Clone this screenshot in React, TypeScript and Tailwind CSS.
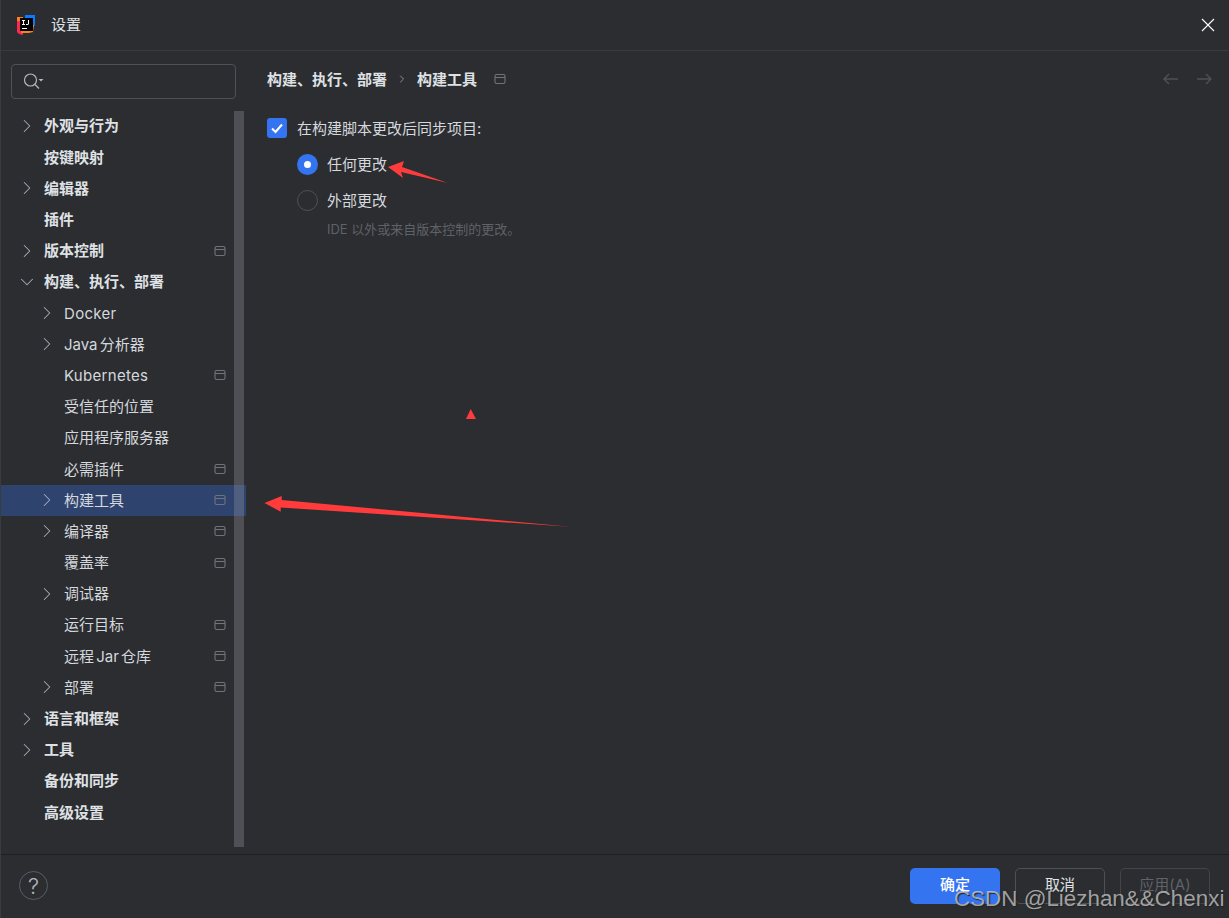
import { ChevronRight, ChevronDown } from 'lucide-react';

const FONT = "font-['Inter','Noto_Sans_CJK_SC',sans-serif]";

type Row = { label: string; level: 0 | 1; arrow?: 'right' | 'down'; pin?: boolean; selected?: boolean; wide?: boolean };

const rows: Row[] = [
  { label: '外观与行为', level: 0, arrow: 'right' },
  { label: '按键映射', level: 0 },
  { label: '编辑器', level: 0, arrow: 'right' },
  { label: '插件', level: 0 },
  { label: '版本控制', level: 0, arrow: 'right', pin: true },
  { label: '构建、执行、部署', level: 0, arrow: 'down' },
  { label: 'Docker', level: 1, arrow: 'right', wide: true },
  { label: 'Java 分析器', level: 1, arrow: 'right' },
  { label: 'Kubernetes', level: 1, pin: true, wide: true },
  { label: '受信任的位置', level: 1 },
  { label: '应用程序服务器', level: 1 },
  { label: '必需插件', level: 1, pin: true },
  { label: '构建工具', level: 1, arrow: 'right', pin: true, selected: true },
  { label: '编译器', level: 1, arrow: 'right', pin: true },
  { label: '覆盖率', level: 1, pin: true },
  { label: '调试器', level: 1, arrow: 'right' },
  { label: '运行目标', level: 1, pin: true },
  { label: '远程 Jar 仓库', level: 1, pin: true },
  { label: '部署', level: 1, arrow: 'right', pin: true },
  { label: '语言和框架', level: 0, arrow: 'right' },
  { label: '工具', level: 0, arrow: 'right' },
  { label: '备份和同步', level: 0 },
  { label: '高级设置', level: 0 },
];

function PinIcon() {
  return (
    <svg width="12" height="12" viewBox="0 0 12 12" fill="none" stroke="#6f737a" strokeWidth="1.1">
      <rect x="1" y="1.5" width="10" height="9" rx="1.5" />
      <path d="M1 4.5h10" />
    </svg>
  );
}

function Logo() {
  return (
    <svg width="20" height="20" viewBox="0 0 20 20">
      <path d="M1 2h6v6H1z" fill="#fc801d" />
      <path d="M9 0h10v10l-4 5H9z" fill="#087cfa" />
      <path d="M1 6h6v14l-4-1-2-2z" fill="#fe2857" />
      <path d="M12 10h6l-1 7-4 1H5v-3h7z" fill="#fc801d" />
      <rect x="4" y="3" width="13" height="13" fill="#000" />
      <path d="M6 5h3v1H8v3h1v1H6V9h1V6H6zM10 5h3v4l-1 1h-2V9h2V5z" fill="#fff" />
      <rect x="6" y="13" width="5" height="1" fill="#fff" />
    </svg>
  );
}

function TreeRow({ label, level, arrow, pin, selected, wide }: Row) {
  return (
    <div className={`flex h-[31.2px] items-center ${selected ? 'bg-[#2e436e]' : ''}`}>
      <span className={`flex w-4 shrink-0 justify-center ${level === 0 ? 'ml-[18px]' : 'ml-[38px]'}`}>
        {arrow === 'right' && <ChevronRight size={22} strokeWidth={1.1} className="shrink-0 text-[#a8adbd]" />}
        {arrow === 'down' && <ChevronDown size={22} strokeWidth={1.1} className="shrink-0 text-[#a8adbd]" />}
      </span>
      <span
        className={`ml-[9px] flex-1 text-[15px] leading-none [word-spacing:-2px] ${
          level === 0 ? 'font-bold text-[#dfe1e5]' : 'text-[#d5d8dd]'
        } ${wide ? 'tracking-[0.3px]' : ''}`}
      >
        {label}
      </span>
      {pin && (
        <span className="mr-[20px] flex">
          <PinIcon />
        </span>
      )}
    </div>
  );
}

function RedArrows() {
  return (
    <svg className="pointer-events-none absolute left-[-1px] top-0" width="1229" height="918" viewBox="0 0 1229 918">
      <path d="M388 167L404 161L402 167L448 183L401 172L403 178Z" fill="#ff3b3b" />
      <path d="M466 419L470.7 409L476 419Z" fill="#ff3b3b" />
      <path d="M264.5 503L281.7 496L281.7 500L570 526.7L280.7 507.5L280.7 511.7Z" fill="#ff3b3b" />
    </svg>
  );
}

export default function App() {
  return (
    <div className={`relative flex h-[918px] w-[1229px] flex-col overflow-hidden border-l border-[#393b40] bg-[#2b2d30] ${FONT}`}>
      {/* Title bar */}
      <header className="flex h-[51px] shrink-0 items-center border-b border-[#393b40] pl-[15px] pr-[14px]">
        <Logo />
        <span className="ml-[15px] text-[15px] text-[#dfe1e5]">设置</span>
        <svg className="ml-auto" width="14" height="14" viewBox="0 0 14 14" stroke="#ffffff" strokeWidth="1.1">
          <path d="M1 1l12 12M13 1L1 13" />
        </svg>
      </header>

      <div className="flex min-h-0 flex-1">
        {/* Sidebar */}
        <aside className="relative w-[245px] shrink-0">
          <div className="mx-[10px] mt-[13px] flex h-[35px] w-[225px] items-center rounded-[4px] border border-[#4e5157] pl-[11px]">
            <svg width="24" height="20" viewBox="0 0 24 20" fill="none">
              <circle cx="7.5" cy="8" r="6" stroke="#b4b8bf" strokeWidth="1.2" />
              <path d="M12 12.5l4 4" stroke="#b4b8bf" strokeWidth="1.2" />
              <path d="M15.5 7h5l-2.5 2.5z" fill="#b4b8bf" />
            </svg>
          </div>
          <div className="mt-[11.4px]">
            {rows.map((row) => (
              <TreeRow key={row.label} {...row} />
            ))}
          </div>
          <div className="absolute left-[233px] top-[60px] h-[736px] w-[10px] bg-[#a0a3ad]/30" />
        </aside>

        {/* Content */}
        <main className="flex-1 pl-[21px] pr-[16px] pt-[18px]">
          <div className="flex h-[20px] items-center text-[15px] font-bold leading-none text-[#dfe1e5]">
            <span>构建、执行、部署</span>
            <ChevronRight size={12} strokeWidth={1.5} className="ml-[9px] text-[#a8adbd]" />
            <span className="ml-[9px]">构建工具</span>
            <span className="ml-[17px] flex">
              <PinIcon />
            </span>
            <svg className="ml-auto" width="18" height="14" viewBox="0 0 18 14" fill="none" stroke="#4e5157" strokeWidth="1.4">
              <path d="M16 7H2M7 2L2 7l5 5" />
            </svg>
            <svg className="ml-[15px]" width="18" height="14" viewBox="0 0 18 14" fill="none" stroke="#4e5157" strokeWidth="1.4">
              <path d="M2 7h14M11 2l5 5-5 5" />
            </svg>
          </div>

          <div className="mt-[29px] flex h-[20px] items-center">
            <span className="flex h-[20px] w-[20px] items-center justify-center rounded-[3px] bg-[#3574f0]">
              <svg width="14" height="14" viewBox="0 0 14 14" fill="none" stroke="#fff" strokeWidth="2">
                <path d="M2 7.5l3.5 3.5L12 3.5" />
              </svg>
            </span>
            <span className="ml-[10px] text-[15px] leading-none text-[#d5d8dd]">在构建脚本更改后同步项目:</span>
          </div>

          <div className="ml-[30px] mt-[16px] flex h-[20px] items-center">
            <span className="flex h-[21px] w-[21px] items-center justify-center rounded-full bg-[#3574f0]">
              <span className="h-[7px] w-[7px] rounded-full bg-white" />
            </span>
            <span className="ml-[9px] text-[15px] leading-none text-[#d5d8dd]">任何更改</span>
          </div>

          <div className="ml-[30px] mt-[16px] flex h-[20px] items-center">
            <span className="h-[21px] w-[21px] rounded-full border-[1.5px] border-[#4e5157]" />
            <span className="ml-[9px] text-[15px] leading-none text-[#d5d8dd]">外部更改</span>
          </div>

          <p className="ml-[60px] mt-[11px] text-[13px] leading-[16px] text-[#5f6268]">IDE 以外或来自版本控制的更改。</p>
        </main>
      </div>

      {/* Footer */}
      <footer className="flex h-[64px] shrink-0 items-center border-t border-[#1e1f22] pb-[2px] pl-[18px] pr-[19px]">
        <span className="flex h-[29px] w-[29px] items-center justify-center rounded-full border border-[#5a5d63] text-[22px] font-light leading-none text-[#b4b8bf]">
          ?
        </span>
        <button className="ml-auto h-[36px] w-[90px] rounded-[5px] bg-[#3574f0] text-[15px] font-medium text-white">确定</button>
        <button className="ml-[15px] h-[36px] w-[90px] rounded-[5px] border border-[#4e5157] text-[15px] text-[#dfe1e5]">取消</button>
        <button className="ml-[15px] h-[36px] w-[90px] rounded-[5px] border border-[#43454a] text-[15px] text-[#5f6268]">应用(A)</button>
      </footer>

      <RedArrows />

      {/* Watermark */}
      <span className="absolute left-[953px] top-[884px] whitespace-nowrap text-[22.4px] leading-[30px] text-[#d9d9d9]/70 [font-family:'Liberation_Sans',sans-serif] [text-shadow:1px_1px_1px_#222]">
        CSDN @Liezhan&amp;&amp;Chenxi
      </span>
    </div>
  );
}
